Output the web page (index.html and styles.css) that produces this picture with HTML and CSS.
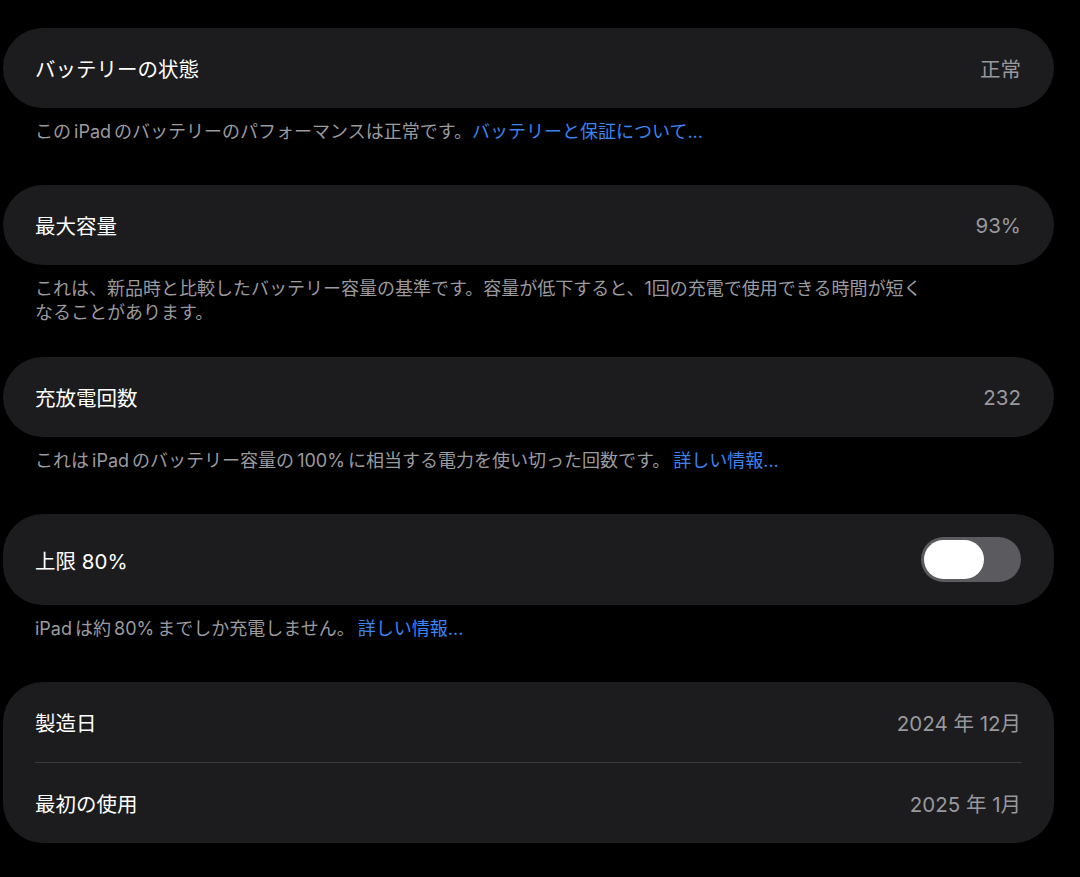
FILE: index.html
```html
<!DOCTYPE html>
<html lang="ja">

<head>
    <meta charset="UTF-8">
    <meta name="viewport" content="width=device-width, initial-scale=1.0">
    <title>バッテリーの状態</title>
    <link rel="stylesheet" href="styles.css">
</head>

<body>
    <div class="page">
        <!-- Battery health -->
        <div class="section">
            <div class="card">
                <div class="row">
                    <span class="label">バッテリーの状態</span>
                    <span class="value">正常</span>
                </div>
            </div>
            <p class="footer">この iPad のバッテリーのパフォーマンスは正常です。<a href="#">バッテリーと保証について...</a></p>
        </div>

        <!-- Maximum capacity -->
        <div class="section tight">
            <div class="card">
                <div class="row">
                    <span class="label">最大容量</span>
                    <span class="value">93%</span>
                </div>
            </div>
            <p class="footer narrow">これは、新品時と比較したバッテリー容量の基準です。容量が低下すると、1回の充電で使用できる時間が短くなることがあります。</p>
        </div>

        <!-- Cycle count -->
        <div class="section">
            <div class="card">
                <div class="row">
                    <span class="label">充放電回数</span>
                    <span class="value">232</span>
                </div>
            </div>
            <p class="footer">これは iPad のバッテリー容量の 100% に相当する電力を使い切った回数です。 <a href="#">詳しい情報...</a></p>
        </div>

        <!-- 80% limit -->
        <div class="section">
            <div class="card">
                <div class="row tall">
                    <span class="label">上限 80%</span>
                    <button class="switch" onclick="this.classList.toggle('on')"><span class="knob"></span></button>
                </div>
            </div>
            <p class="footer">iPad は約 80% までしか充電しません。 <a href="#">詳しい情報...</a></p>
        </div>

        <!-- Dates -->
        <div class="section">
            <div class="card">
                <div class="row">
                    <span class="label">製造日</span>
                    <span class="value">2024 年 12月</span>
                </div>
                <div class="divider"></div>
                <div class="row">
                    <span class="label">最初の使用</span>
                    <span class="value">2025 年 1月</span>
                </div>
            </div>
        </div>
    </div>
</body>

</html>
```

FILE: styles.css
```css
body {
    margin: 0;
    background-color: #000;
    font-family: "Inter", "Noto Sans CJK JP", sans-serif;
    -webkit-font-smoothing: antialiased;
}

.page {
    width: 1051px;
    margin-left: 3px;
    padding-top: 28px;
}

.section {
    margin-bottom: 41px;
}

/* two-line footer sits a bit closer to the next card */
.section.tight {
    margin-bottom: 32px;
}

.card {
    background-color: #1c1c1e;
    border-radius: 40px;
    overflow: hidden;
}

.row {
    display: flex;
    align-items: center;
    justify-content: space-between;
    height: 80px;
    padding: 0 33px 0 32px;
}

.row.tall {
    height: 91px;
}

.label {
    color: #ffffff;
    font-size: 20.5px;
}

.value {
    color: #98989e;
    font-size: 20.5px;
}

.divider {
    height: 1px;
    margin: 0 32px;
    background-color: #3a3a3e;
}

.footer {
    margin: 0;
    padding: 12px 32px 0;
    color: #9a9a9f;
    font-size: 18px;
    line-height: 24px;
    word-spacing: -2px;
}

.footer.narrow {
    max-width: 890px;
}

.footer a {
    color: #3b84f5;
    text-decoration: none;
}

/* Toggle switch */
.switch {
    position: relative;
    width: 100px;
    height: 45px;
    border: none;
    border-radius: 23px;
    background-color: #5a5a5f;
    padding: 0;
    cursor: pointer;
}

.switch .knob {
    position: absolute;
    top: 3px;
    left: 3px;
    width: 60px;
    height: 39px;
    border-radius: 20px;
    background-color: #fff;
    transition: left 0.2s;
}

.switch.on {
    background-color: #34c759;
}

.switch.on .knob {
    left: 37px;
}
```
